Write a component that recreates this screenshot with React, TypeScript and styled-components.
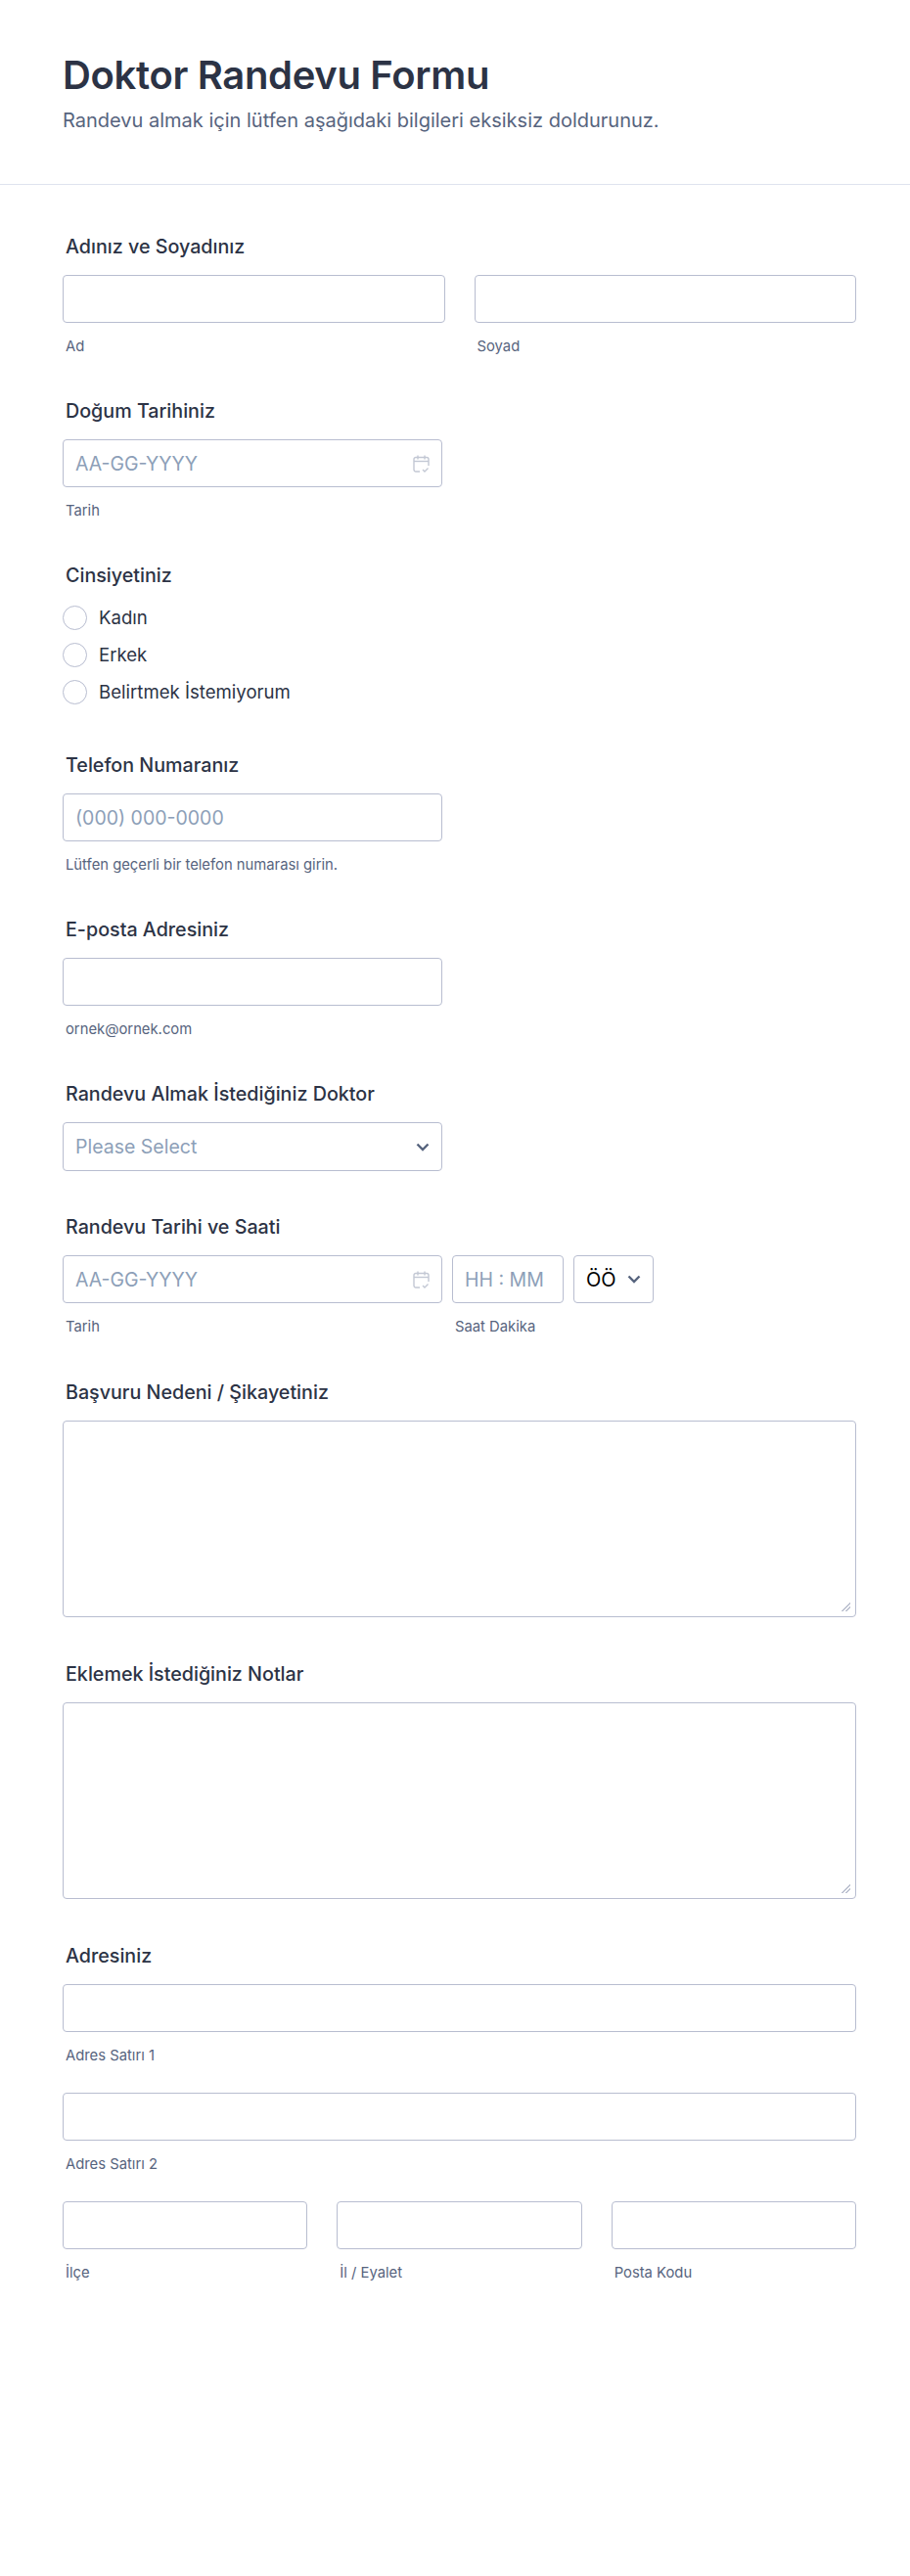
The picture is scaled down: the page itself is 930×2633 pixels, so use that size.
import React from "react";
import styled, { createGlobalStyle } from "styled-components";

const GlobalStyle = createGlobalStyle`
  html, body {
    margin: 0;
    padding: 0;
    background: #fff;
  }
  * {
    box-sizing: border-box;
  }
`;

const Page = styled.div`
  width: 930px;
  min-height: 2633px;
  background: #fff;
  font-family: Inter, "Liberation Sans", sans-serif;
  color: #2c3345;
`;

const Header = styled.header`
  height: 189px;
  padding: 51px 55px 0 64px;
  border-bottom: 1px solid #dfe3ee;
`;

const Title = styled.h1`
  margin: 0;
  font-size: 40px;
  line-height: 52px;
  font-weight: 600;
  letter-spacing: -0.33px;
  color: #2c3345;
`;

const Subtitle = styled.p`
  margin: 6px 0 0;
  font-size: 20px;
  line-height: 28px;
  color: #57647e;
`;

const Form = styled.form`
  padding: 50px 55px 0 64px;
`;

const Section = styled.section<{ $gap?: number }>`
  margin-bottom: ${(p) => p.$gap ?? 44}px;
`;

const Label = styled.label`
  display: block;
  margin: 0 0 17px 3px;
  padding-top: 1px;
  font-size: 19.7px;
  line-height: 24px;
  font-weight: 500;
  color: #2c3345;
`;

const Sub = styled.span`
  display: block;
  margin: 15px 0 0 3px;
  font-size: 14.8px;
  line-height: 18px;
  color: #57647e;
`;

const Row = styled.div<{ $gap: number }>`
  display: flex;
  gap: ${(p) => p.$gap}px;
`;

const Col = styled.div<{ $width?: number }>`
  flex: ${(p) => (p.$width ? `0 0 ${p.$width}px` : "1 1 0")};
  min-width: 0;
`;

const AddressLine = styled.div`
  margin-bottom: 29px;
`;

const Field = styled.div<{ $width?: number; $height?: number }>`
  display: flex;
  align-items: center;
  width: ${(p) => (p.$width ? `${p.$width}px` : "100%")};
  height: ${(p) => p.$height ?? 49}px;
  padding: 0 12px;
  border: 1px solid #b8bdd0;
  border-radius: 4px;
  background: #fff;
`;

const Input = styled.input`
  flex: 1;
  min-width: 0;
  padding: 0;
  border: 0;
  outline: 0;
  background: transparent;
  font: inherit;
  font-size: 19.5px;
  color: #2c3345;

  &::placeholder {
    color: #8d9fb8;
    opacity: 1;
  }
`;

const SelectText = styled.span<{ $value?: boolean }>`
  flex: 1;
  font-size: ${(p) => (p.$value ? 20 : 19.5)}px;
  color: ${(p) => (p.$value ? "#000" : "#8d9fb8")};
`;

const ChevronSvg = styled.svg`
  flex: none;
  width: 14px;
  height: 9px;
  fill: none;
  stroke: #57647e;
  stroke-width: 2.4;
`;

const Area = styled.textarea`
  display: block;
  width: 100%;
  height: 201px;
  padding: 8px 12px;
  border: 1px solid #b8bdd0;
  border-radius: 4px;
  outline: 0;
  resize: vertical;
  background: #fff;
  font: inherit;

  &::-webkit-resizer {
    background: linear-gradient(
        135deg,
        transparent 46%,
        #bcc1d0 46%,
        #bcc1d0 56%,
        transparent 56%,
        transparent 72%,
        #bcc1d0 72%,
        #bcc1d0 82%,
        transparent 82%
      )
      1px 1px / 9px 9px no-repeat;
  }
`;

const Radios = styled.div`
  display: flex;
  flex-direction: column;
  gap: 14px;
  margin-top: 19px;
`;

const RadioRow = styled.div`
  display: flex;
  align-items: center;
  gap: 12px;
  height: 24px;
  font-size: 18.6px;
  color: #2c3345;
`;

const Circle = styled.span`
  flex: none;
  width: 25px;
  height: 25px;
  border: 1px solid #b8bdd0;
  border-radius: 50%;
`;

const Chevron = () => (
  <ChevronSvg viewBox="0 0 14 9">
    <path d="M1.5 1.5L7 7l5.5-5.5" />
  </ChevronSvg>
);

const CalendarIcon = () => (
  <svg width="17" height="18" viewBox="0 0 17 18" fill="none" stroke="#c3c8d4" strokeWidth="1.4">
    <path d="M5 .5v4M12 .5v4" />
    <path d="M7 17H3a2 2 0 0 1-2-2V4.5a2 2 0 0 1 2-2h11a2 2 0 0 1 2 2V11" />
    <path d="M1 6.5h15" />
    <path d="M10 15l2 2 3.5-3.5" />
  </svg>
);

const DateField = () => (
  <Field $width={388}>
    <Input placeholder="AA-GG-YYYY" />
    <CalendarIcon />
  </Field>
);

export default function App() {
  return (
    <Page>
      <GlobalStyle />
      <Header>
        <Title>Doktor Randevu Formu</Title>
        <Subtitle>Randevu almak için lütfen aşağıdaki bilgileri eksiksiz doldurunuz.</Subtitle>
      </Header>
      <Form>
        <Section>
          <Label>Adınız ve Soyadınız</Label>
          <Row $gap={30}>
            <Col>
              <Field><Input /></Field>
              <Sub>Ad</Sub>
            </Col>
            <Col>
              <Field><Input /></Field>
              <Sub>Soyad</Sub>
            </Col>
          </Row>
        </Section>
        <Section>
          <Label>Doğum Tarihiniz</Label>
          <DateField />
          <Sub>Tarih</Sub>
        </Section>
        <Section $gap={50}>
          <Label>Cinsiyetiniz</Label>
          <Radios>
            <RadioRow><Circle />Kadın</RadioRow>
            <RadioRow><Circle />Erkek</RadioRow>
            <RadioRow><Circle />Belirtmek İstemiyorum</RadioRow>
          </Radios>
        </Section>
        <Section>
          <Label>Telefon Numaranız</Label>
          <Field $width={388}><Input placeholder="(000) 000-0000" /></Field>
          <Sub>Lütfen geçerli bir telefon numarası girin.</Sub>
        </Section>
        <Section>
          <Label>E-posta Adresiniz</Label>
          <Field $width={388}><Input /></Field>
          <Sub>ornek@ornek.com</Sub>
        </Section>
        <Section>
          <Label>Randevu Almak İstediğiniz Doktor</Label>
          <Field $width={388} $height={50}>
            <SelectText>Please Select</SelectText>
            <Chevron />
          </Field>
        </Section>
        <Section $gap={45}>
          <Label>Randevu Tarihi ve Saati</Label>
          <Row $gap={10}>
            <Col $width={388}>
              <DateField />
              <Sub>Tarih</Sub>
            </Col>
            <Col $width={114}>
              <Field><Input placeholder="HH : MM" /></Field>
              <Sub>Saat Dakika</Sub>
            </Col>
            <Col $width={82}>
              <Field>
                <SelectText $value>ÖÖ</SelectText>
                <Chevron />
              </Field>
            </Col>
          </Row>
        </Section>
        <Section $gap={45}>
          <Label>Başvuru Nedeni / Şikayetiniz</Label>
          <Area />
        </Section>
        <Section $gap={45}>
          <Label>Eklemek İstediğiniz Notlar</Label>
          <Area />
        </Section>
        <Section>
          <Label>Adresiniz</Label>
          <AddressLine>
            <Field><Input /></Field>
            <Sub>Adres Satırı 1</Sub>
          </AddressLine>
          <AddressLine>
            <Field><Input /></Field>
            <Sub>Adres Satırı 2</Sub>
          </AddressLine>
          <Row $gap={30}>
            <Col>
              <Field><Input /></Field>
              <Sub>İlçe</Sub>
            </Col>
            <Col>
              <Field><Input /></Field>
              <Sub>İl / Eyalet</Sub>
            </Col>
            <Col>
              <Field><Input /></Field>
              <Sub>Posta Kodu</Sub>
            </Col>
          </Row>
        </Section>
      </Form>
    </Page>
  );
}
